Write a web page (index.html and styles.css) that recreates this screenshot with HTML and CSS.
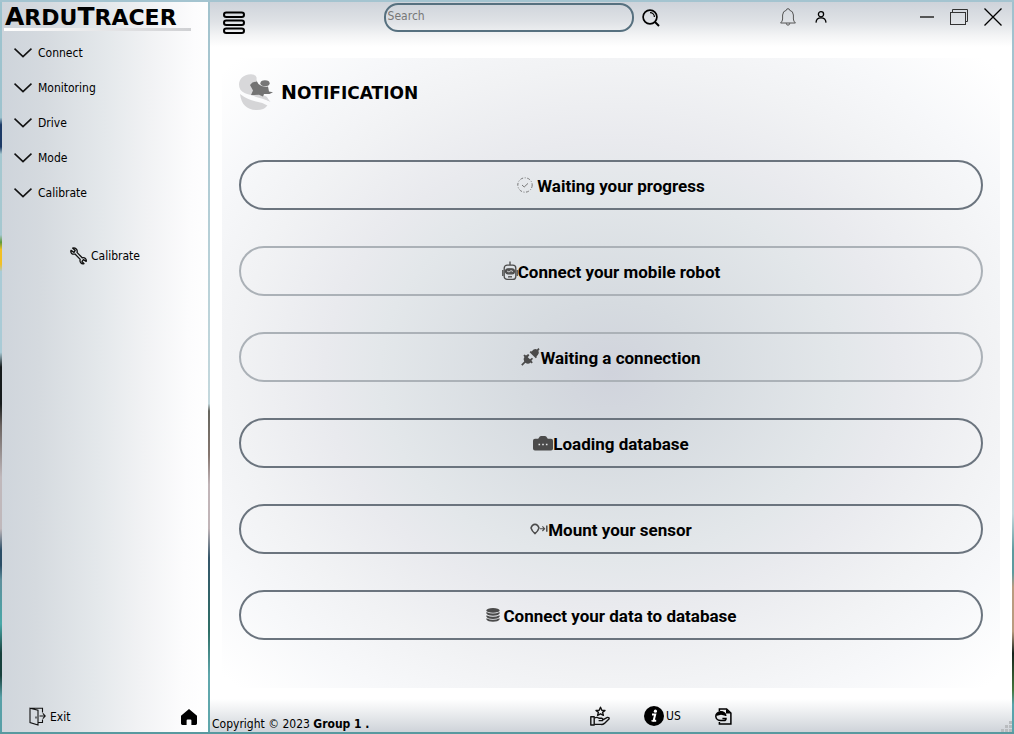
FILE: index.html
```html
<!DOCTYPE html>
<html lang="en">
<head>
<meta charset="utf-8">
<title>ArduTracer</title>
<link rel="stylesheet" href="styles.css">
</head>
<body>
<aside class="sidebar">
  <h1 class="brand"><span class="cap">A</span>rdu<span class="cap">T</span>racer</h1>
  <nav class="menu">
    <button class="menu-item"><svg width="18" height="10" viewBox="0 0 18 10"><path d="M0.5 0.7 L9 8.7 L17.5 0.7"/></svg>Connect</button>
    <button class="menu-item"><svg width="18" height="10" viewBox="0 0 18 10"><path d="M0.5 0.7 L9 8.7 L17.5 0.7"/></svg>Monitoring</button>
    <button class="menu-item"><svg width="18" height="10" viewBox="0 0 18 10"><path d="M0.5 0.7 L9 8.7 L17.5 0.7"/></svg>Drive</button>
    <button class="menu-item"><svg width="18" height="10" viewBox="0 0 18 10"><path d="M0.5 0.7 L9 8.7 L17.5 0.7"/></svg>Mode</button>
    <button class="menu-item"><svg width="18" height="10" viewBox="0 0 18 10"><path d="M0.5 0.7 L9 8.7 L17.5 0.7"/></svg>Calibrate</button>
  </nav>
  <button class="sub-item">
    <svg width="17" height="18" viewBox="0 0 17 18" fill="none" stroke="#111" stroke-width="1.3" stroke-linejoin="round"><path d="M2.6 1 L5.2 3.4 L4 5.4 L1 3.4 C0.2 6 2.2 7.8 5 7 L10.2 12.4 C9.4 15 11.4 17.4 14 16.6 L12 14.4 L13.4 12.6 L16.2 14.4 C16.8 12 14.8 10.2 12.2 10.8 L7 5.4 C8 2.8 5.4 0.2 2.6 1 Z"/></svg>
    Calibrate
  </button>
  <div class="sidebar-foot">
    <button class="exit">
      <svg width="17" height="19" viewBox="0 0 17 19" fill="none" stroke="#111" stroke-width="1.1"><path d="M1 1.2 L9 3.2 V18 L1 15.6 Z M1 1.2 H13.5 V5.5 M13.5 12.5 V15.5 H9 M10.5 9 H16 M13.8 6.4 L16.2 9 L13.8 11.6"/><path d="M7 9.5 V11.5"/></svg>
      Exit
    </button>
    <button class="home" aria-label="Home">
      <svg width="16" height="16" viewBox="0 0 16 16"><path d="M8 0 L16 6.8 V14.6 Q16 16 14.6 16 H10.4 V11.4 Q10.4 10.4 9.4 10.4 H6.6 Q5.6 10.4 5.6 11.4 V16 H1.4 Q0 16 0 14.6 V6.8 Z"/></svg>
    </button>
  </div>
</aside>
<main class="main">
  <header class="topbar">
    <button class="burger" aria-label="Menu">
      <svg width="22" height="24" viewBox="0 0 22 24" fill="none" stroke="#000" stroke-width="2"><rect x="1" y="1.5" width="20" height="4.6" rx="2.3"/><rect x="1" y="9.5" width="20" height="4.6" rx="2.3"/><rect x="1" y="17.5" width="20" height="4.6" rx="2.3"/></svg>
    </button>
    <span class="space-a"></span>
    <form class="search">
      <input type="text" placeholder="Search" aria-label="Search">
      <button type="button" aria-label="Find">
        <svg width="18" height="18" viewBox="0 0 18 18" fill="none" stroke="#000" stroke-width="1.7"><circle cx="8" cy="8" r="6.9"/><path d="M13 13 L17 17" stroke-width="2"/><path d="M8 3.6 A4.4 4.4 0 0 1 12.4 8" stroke-width="1.3"/></svg>
      </button>
    </form>
    <span class="space-b"></span>
    <div class="user">
      <button aria-label="Alerts"><svg width="16" height="18" viewBox="0 0 16 18" fill="none" stroke="#555" stroke-width="1"><path d="M0.6 15 H15.4 Q13.4 13.2 13.4 11 V7 Q13.2 3 9.6 2.2 Q9.6 0.7 8 0.7 Q6.4 0.7 6.4 2.2 Q2.8 3 2.6 7 V11 Q2.6 13.2 0.6 15 Z M6.2 15.2 Q6.4 17.2 8 17.2 Q9.6 17.2 9.8 15.2"/></svg></button>
      <button aria-label="Account"><svg width="12" height="12" viewBox="0 0 12 12" fill="none" stroke="#000" stroke-width="1.3"><circle cx="6" cy="3.3" r="2.6"/><path d="M1 11.6 C1.4 5.4 10.6 5.4 11 11.6"/></svg></button>
    </div>
    <span class="space-c"></span>
    <div class="controls">
      <button aria-label="Minimise"><svg width="14" height="18" viewBox="0 0 14 18"><path d="M0 9 H14" stroke="#333" stroke-width="1.6"/></svg></button>
      <button aria-label="Restore"><svg width="18" height="16" viewBox="0 0 18 16" fill="none" stroke="#333" stroke-width="1"><rect x="0.5" y="3.5" width="15" height="12"/><path d="M2.5 3.5 V0.5 H17.5 V12.5 H15.5"/></svg></button>
      <button aria-label="Close"><svg width="18" height="18" viewBox="0 0 18 18"><path d="M0.5 0.5 L17.5 17.5 M17.5 0.5 L0.5 17.5" stroke="#000" stroke-width="1.3"/></svg></button>
    </div>
  </header>
  <section class="panel">
    <div class="panel-head">
      <svg width="34" height="36" viewBox="0 0 34 36"><path d="M12 0.2 C4 0.4 0 5 0 10.5 C0 14.5 2 17.5 5.5 19 C12 21.5 22 24 30 27 L28 23 L20 19 L17.5 12 L17.6 3.4 Q16.4 0.2 12 0.2 Z" fill="#d8d8da"/><path d="M1 20 Q8 25.5 17 27.4 Q24 28.6 28.4 31.4 Q25 36 18 36 C8 36 2.5 31 1 20 Z" fill="#d5d5d7"/><path d="M18 21 L27 22.5 L31.5 28 Z" fill="#d5d5d7"/><path d="M17.4 6.5 L19.5 10 Q23 13.5 29 12.5 L30 17.5 L34 18.3 L30.5 20 L25 20 L24 22.5 L20 20.8 L12 21 L14 16.5 L11 11 Q14 7 17.4 8 Z" fill="#737373"/><ellipse cx="26" cy="9.2" rx="4.6" ry="3" fill="#777"/></svg>
      <h2><span class="cap">N</span>otification</h2>
    </div>
    <div class="steps">
      <button class="step roomy"><svg width="16" height="16" viewBox="0 0 16 16" fill="none" stroke="#777" stroke-width="1"><circle cx="8" cy="8" r="7.2" stroke-dasharray="3 1.6 1 1.6"/><path d="M5 8 L7.2 10 L11 6.4"/></svg><span>Waiting your progress</span></button>
      <button class="step soft"><svg width="16" height="20" viewBox="0 0 16 20" fill="none" stroke="#4b4b4b" stroke-width="1.3"><path d="M8 0.5 V4"/><rect x="2.2" y="4.2" width="11.6" height="14.2" rx="3"/><path d="M0.8 9 V15 M15.2 9 V15"/><rect x="3.6" y="7.8" width="8.8" height="5" rx="2.4" fill="#555"/><path d="M5 10 L7 11 L9 9.6 L11 10.6" stroke="#ccc" stroke-width="1"/><path d="M6 15.8 H10"/></svg><span>Connect your mobile robot</span></button>
      <button class="step soft"><svg width="19" height="18" viewBox="0 0 19 18" fill="#4b4b4b"><path d="M8.6 4.2 L9.8 3 L10.6 3.6 L12.6 1.6 Q14.6 0.4 16 1.6 L17.4 0 L18.6 1.2 L17.4 2.8 Q18.6 5 16.8 7 L15.4 8.4 L16 9 L14.8 10.2 Z"/><path d="M2.4 7.6 L3.6 6.4 L5 7.6 L7.2 6 L8.4 7.2 L6.8 9.2 L9 11.2 L11 9.8 L12 10.8 L10.4 12.8 L11.8 14.2 L10.6 15.4 L9.6 14.6 Q7 17 4.4 14.8 L1.4 17.8 L0.2 16.6 L3.2 13.6 Q1.6 11.4 3.4 9 Z"/></svg><span>Waiting a connection</span></button>
      <button class="step"><svg width="20" height="15" viewBox="0 0 20 15"><path d="M5.2 2.8 L6.8 0.6 Q7.4 0 8 0 H12 Q12.6 0 13.2 0.6 L14.8 2.8 H18 Q20 2.8 20 4.8 V12.6 Q20 14.6 18 14.6 H2 Q0 14.6 0 12.6 V4.8 Q0 2.8 2 2.8 Z" fill="#4b4b4b"/><path d="M5.5 8.5 h1.6 m2.1 0 h1.6 m2.1 0 h1.6" stroke="#e4e6e8" stroke-width="1.6"/></svg><span>Loading database</span></button>
      <button class="step"><svg width="18" height="12" viewBox="0 0 18 12" fill="none" stroke="#4b4b4b" stroke-width="1.5"><path d="M1 5 Q2 1.4 5 1.2 Q8 1.4 9 5 Q8 8.2 5 10.6 Q2 8.2 1 5 Z"/><path d="M10 5.7 H14.5 M12.4 3.4 L14.6 5.7 L12.4 8" stroke-width="1.1"/><path d="M16.8 2.6 V8.8"/></svg><span>Mount your sensor</span></button>
      <button class="step roomy"><svg width="14" height="14" viewBox="0 0 14 14" fill="#4b4b4b"><ellipse cx="7" cy="2.4" rx="6.6" ry="2.3"/><path d="M0.4 4 Q7 7 13.6 4 V5.6 Q12 7.8 7 7.8 Q2 7.8 0.4 5.6 Z"/><path d="M0.4 7.2 Q7 10.2 13.6 7.2 V8.8 Q12 11 7 11 Q2 11 0.4 8.8 Z"/><path d="M0.4 10.2 Q7 13.2 13.6 10.2 V11.6 Q12 13.8 7 13.8 Q2 13.8 0.4 11.6 Z"/></svg><span>Connect your data to database</span></button>
    </div>
  </section>
  <footer class="bottombar">
    <p class="copyright">Copyright © 2023 <b>Group 1 .</b></p>
    <div class="links">
      <button aria-label="Rate"><svg width="20" height="20" viewBox="0 0 20 20" fill="none" stroke="#111" stroke-width="1.4" stroke-linejoin="round"><path d="M10.5 1.2 L11.8 4.2 L15 4.4 L12.6 6.4 L13.4 9.4 L10.5 7.8 L7.6 9.4 L8.4 6.4 L6 4.4 L9.2 4.2 Z"/><rect x="0.8" y="10.8" width="3.4" height="8.2"/><path d="M4.4 12 Q7 10.6 9 12.2 H11.6 Q13.4 12.6 12.4 14.6 H8.6 M12.8 13.8 L17.4 11.4 Q19.6 11.2 19 13 L14.4 17.4 Q12.8 18.6 11 18.4 H4.4"/></svg></button>
      <button><svg width="20" height="20" viewBox="0 0 20 20"><circle cx="10" cy="10" r="10"/><circle cx="11.4" cy="5.2" r="1.6" fill="#fff"/><path d="M8 8.6 H11.2 L9.6 14.8 H12.2" fill="none" stroke="#fff" stroke-width="2"/><path d="M7.4 14.8 H10" stroke="#fff" stroke-width="1.2"/></svg>US</button>
      <button aria-label="Report"><svg width="17" height="17" viewBox="0 0 17 17" fill="none" stroke="#000" stroke-width="1.5"><path d="M4.4 3 V0.9 H11.6 L15.9 5 V16 H4.4 V14"/><path d="M11 0.8 V5.6 H16 Z" fill="#000" stroke="none"/><path d="M10.8 8 A5 4.4 0 1 0 6 12.6 H9 Q11 12.4 11 10.4 H7.4"/><path d="M1.2 8 Q2 3.4 6 3.4 Q10 3.4 11.2 8 L6 6.8 Z" fill="#000" stroke="none"/></svg></button>
    </div>
    <svg class="grip" width="11" height="11" viewBox="0 0 11 11" fill="#b9bcbf"><path d="M8 0h3v3h-3z M8 4h3v3h-3z M8 8h3v3h-3z M4 4h3v3h-3z M4 8h3v3h-3z M0 8h3v3h-3z"/></svg>
  </footer>
</main>
</body>
</html>
```
FILE: styles.css
```css
* { box-sizing: border-box; }

html { height: 100%; }

body {
  margin: 0;
  min-height: 100%;
  padding: 2px;
  display: grid;
  grid-template-columns: 206px minmax(0, 1fr);
  column-gap: 2px;
  font: 12px/16px "DejaVu Sans Condensed", "Noto Sans", sans-serif;
  color: #000;
  background:
    linear-gradient(#a4c4d0, #a4c4d0) top / 100% 2px no-repeat,
    linear-gradient(#58999f, #58999f) bottom / 100% 2px no-repeat,
    linear-gradient(#9dc3ce 0 16%, #1c3a66 17% 20%, #a5c8d0 21% 32%, #5f9a3a 33%, #f2c024 34% 36%, #a9cbd6 37% 48%, #151a1b 50% 55%, #6a6360 58%, #c0b8bb 65% 72%, #2a4d66 75% 77%, #5e8f9c 79%, #48a8a8 85%, #17403c 89% 92%, #58a0a7 95%) left / 2px 100% no-repeat,
    linear-gradient(#9fc1ce 0, #b3ced6 40%, #c4d8dd 70%, #5d9a9e 75% 78%, #b99c80 80% 86%, #17221c 89%, #44763c 94%, #58a3ab 96%) right / 2px 100% no-repeat,
    linear-gradient(#a1c2cd 0, #c4d8dd 55%, #66665f 56%, #85766f 62%, #c1b5b8 66% 72%, #35566a 76%, #2f6f67 86%, #60a7ac 92%);
}

button {
  margin: 0;
  padding: 0;
  border: 0;
  background: none;
  font: inherit;
  color: inherit;
  display: flex;
  align-items: center;
}

svg { display: block; flex: none; }

.sidebar {
  display: flex;
  flex-direction: column;
  background: linear-gradient(91deg, #ced4db 0%, #d5dadf 20%, #e4e8eb 48%, #f1f2f4 68%, #fcfcfd 88%, #fff 100%);
}

.brand {
  margin: 0 17px 0 2px;
  padding: 5px 0 0 1px;
  border-bottom: 3px solid;
  border-image: linear-gradient(90deg, #fff, #cfd0d3) 1;
  font: bold 22px/21px "DejaVu Sans", sans-serif;
  text-transform: uppercase;
  white-space: nowrap;
}

.cap { line-height: 1px; }
.brand .cap { font-size: 25px; }

.menu {
  margin-top: 4px;
  display: flex;
  flex-direction: column;
}

.menu-item {
  height: 35px;
  padding-left: 12px;
  gap: 6px;
}

.menu-item path {
  fill: none;
  stroke: #111;
  stroke-width: 1.6;
}

.sub-item {
  align-self: center;
  margin-top: 37px;
  gap: 4px;
}

.sidebar-foot {
  margin-top: auto;
  padding: 0 11px 6px 27px;
  display: flex;
  align-items: center;
  justify-content: space-between;
}

.exit { gap: 4px; }

.main {
  display: flex;
  flex-direction: column;
  background: #fff;
}

.topbar {
  height: 56px;
  padding: 1px 10px 0 13px;
  display: flex;
  align-items: flex-start;
  background: linear-gradient(#ced3da 0, #dfe2e6 35%, #f3f4f5 60%, #fff 80%);
}

.burger { padding-top: 8px; }
.space-a { flex: 139 1 0; }
.space-b { flex: 121 1 0; }
.space-c { flex: 93 1 0; }

.search {
  display: flex;
  align-items: center;
  gap: 8px;
}

.search input {
  width: 250px;
  height: 29px;
  padding: 0 2px 4px;
  border: 2px solid #56707f;
  border-radius: 14px;
  background: transparent;
  font: inherit;
  color: #222;
}

.search input::placeholder { color: #777; opacity: 1; }

.user, .controls {
  height: 28px;
  display: flex;
  align-items: center;
}

.user { gap: 19px; }
.controls { gap: 16px; }

.panel {
  flex: 1;
  margin: 0 12px;
  padding: 15px 17px 48px;
  background: radial-gradient(ellipse farthest-corner, #d0d3dc 0%, #d6dbe0 16%, #e3e7ea 42%, #e9eaee 52%, #f1f2f4 68%, #f7f8fa 82%, #fff 98%);
}

.panel-head {
  height: 37px;
  display: flex;
  align-items: center;
  gap: 8px;
}

.panel-head h2 {
  margin: 0;
  padding-top: 3px;
  font: bold 17px/20px "DejaVu Sans", sans-serif;
  text-transform: uppercase;
}

.panel-head .cap { font-size: 19px; }

.steps {
  margin-top: 50px;
  display: flex;
  flex-direction: column;
  gap: 36px;
}

.step {
  height: 50px;
  justify-content: center;
  border: 2px solid #6b747e;
  border-radius: 25px;
  font: bold 17px/20px Roboto, sans-serif;
}

.step span { padding-top: 2px; }
.step.roomy { gap: 4px; }
.step.soft { border-color: #abb1b7; }

.bottombar {
  height: 44px;
  display: grid;
  grid-template-columns: 1fr auto 1fr;
  align-items: end;
  background: linear-gradient(#fff 25%, #eceef0 55%, #ced3d9 100%);
}

.copyright { margin: 0; padding-left: 2px; }

.links {
  padding: 0 0 6px 100px;
  display: flex;
  align-items: center;
  gap: 34px;
}

.links button { gap: 2px; }

.grip { justify-self: end; }
```
